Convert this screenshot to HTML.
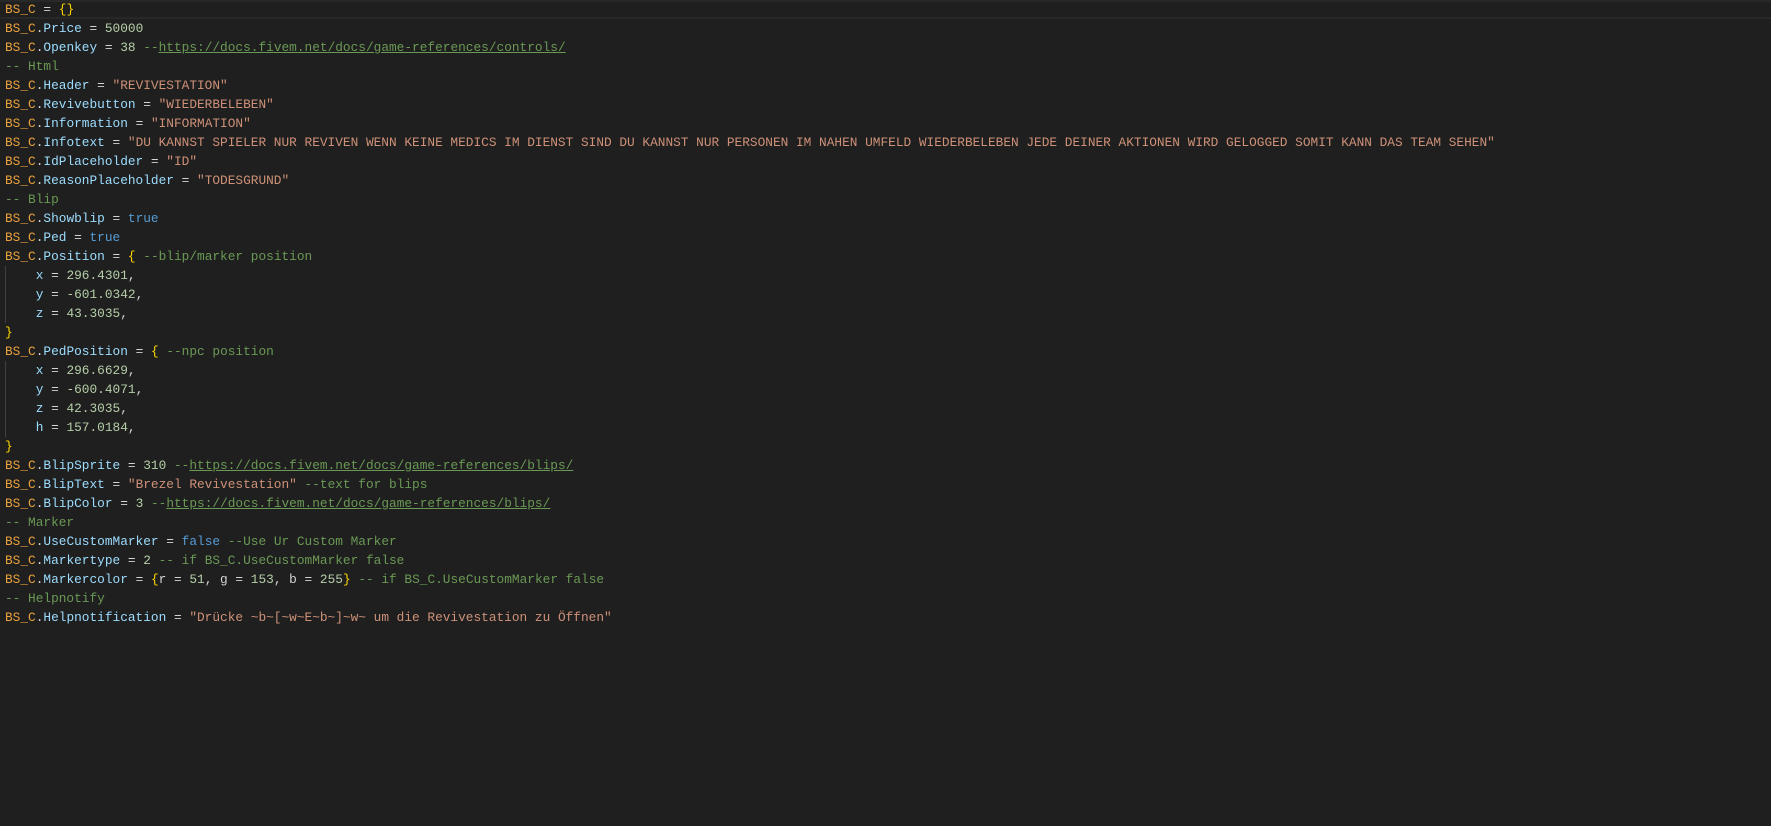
<!DOCTYPE html>
<html><head><meta charset="utf-8"><style>
html,body{margin:0;padding:0;background:#1f1f1f;width:1771px;height:826px;overflow:hidden}
pre{margin:0;position:absolute;left:5px;top:0;font-family:"Liberation Mono",monospace;font-size:12.8px;line-height:19px;color:#d4d4d4;white-space:pre}
.hl{position:absolute;left:0;top:0;width:1771px;height:15px;border-top:2px solid #282828;border-bottom:2px solid #282828}
.guide{position:absolute;left:5px;width:1px;background:#404040}
.v{color:#e8a13c}.p{color:#9cdcfe}.n{color:#b5cea8}.s{color:#ce9178}.c{color:#6a9955}.u{color:#6a9955;text-decoration:underline}.b{color:#ffd700}.k{color:#569cd6}
</style></head><body>
<div class="hl"></div>
<div class="guide" style="top:266px;height:57px"></div>
<div class="guide" style="top:361px;height:76px"></div>
<pre><span class="v">BS_C</span> = <span class="b">{}</span>
<span class="v">BS_C</span>.<span class="p">Price</span> = <span class="n">50000</span>
<span class="v">BS_C</span>.<span class="p">Openkey</span> = <span class="n">38</span> <span class="c">--</span><span class="u">https://docs.fivem.net/docs/game-references/controls/</span>
<span class="c">-- Html</span>
<span class="v">BS_C</span>.<span class="p">Header</span> = <span class="s">"REVIVESTATION"</span>
<span class="v">BS_C</span>.<span class="p">Revivebutton</span> = <span class="s">"WIEDERBELEBEN"</span>
<span class="v">BS_C</span>.<span class="p">Information</span> = <span class="s">"INFORMATION"</span>
<span class="v">BS_C</span>.<span class="p">Infotext</span> = <span class="s">"DU KANNST SPIELER NUR REVIVEN WENN KEINE MEDICS IM DIENST SIND DU KANNST NUR PERSONEN IM NAHEN UMFELD WIEDERBELEBEN JEDE DEINER AKTIONEN WIRD GELOGGED SOMIT KANN DAS TEAM SEHEN"</span>
<span class="v">BS_C</span>.<span class="p">IdPlaceholder</span> = <span class="s">"ID"</span>
<span class="v">BS_C</span>.<span class="p">ReasonPlaceholder</span> = <span class="s">"TODESGRUND"</span>
<span class="c">-- Blip</span>
<span class="v">BS_C</span>.<span class="p">Showblip</span> = <span class="k">true</span>
<span class="v">BS_C</span>.<span class="p">Ped</span> = <span class="k">true</span>
<span class="v">BS_C</span>.<span class="p">Position</span> = <span class="b">{</span> <span class="c">--blip/marker position</span>
    <span class="p">x</span> = <span class="n">296.4301</span>,
    <span class="p">y</span> = <span class="n">-601.0342</span>,
    <span class="p">z</span> = <span class="n">43.3035</span>,
<span class="b">}</span>
<span class="v">BS_C</span>.<span class="p">PedPosition</span> = <span class="b">{</span> <span class="c">--npc position</span>
    <span class="p">x</span> = <span class="n">296.6629</span>,
    <span class="p">y</span> = <span class="n">-600.4071</span>,
    <span class="p">z</span> = <span class="n">42.3035</span>,
    <span class="p">h</span> = <span class="n">157.0184</span>,
<span class="b">}</span>
<span class="v">BS_C</span>.<span class="p">BlipSprite</span> = <span class="n">310</span> <span class="c">--</span><span class="u">https://docs.fivem.net/docs/game-references/blips/</span>
<span class="v">BS_C</span>.<span class="p">BlipText</span> = <span class="s">"Brezel Revivestation"</span> <span class="c">--text for blips</span>
<span class="v">BS_C</span>.<span class="p">BlipColor</span> = <span class="n">3</span> <span class="c">--</span><span class="u">https://docs.fivem.net/docs/game-references/blips/</span>
<span class="c">-- Marker</span>
<span class="v">BS_C</span>.<span class="p">UseCustomMarker</span> = <span class="k">false</span> <span class="c">--Use Ur Custom Marker</span>
<span class="v">BS_C</span>.<span class="p">Markertype</span> = <span class="n">2</span> <span class="c">-- if BS_C.UseCustomMarker false</span>
<span class="v">BS_C</span>.<span class="p">Markercolor</span> = <span class="b">{</span>r = <span class="n">51</span>, g = <span class="n">153</span>, b = <span class="n">255</span><span class="b">}</span> <span class="c">-- if BS_C.UseCustomMarker false</span>
<span class="c">-- Helpnotify</span>
<span class="v">BS_C</span>.<span class="p">Helpnotification</span> = <span class="s">"Drücke ~b~[~w~E~b~]~w~ um die Revivestation zu Öffnen"</span>
</pre>
</body></html>
